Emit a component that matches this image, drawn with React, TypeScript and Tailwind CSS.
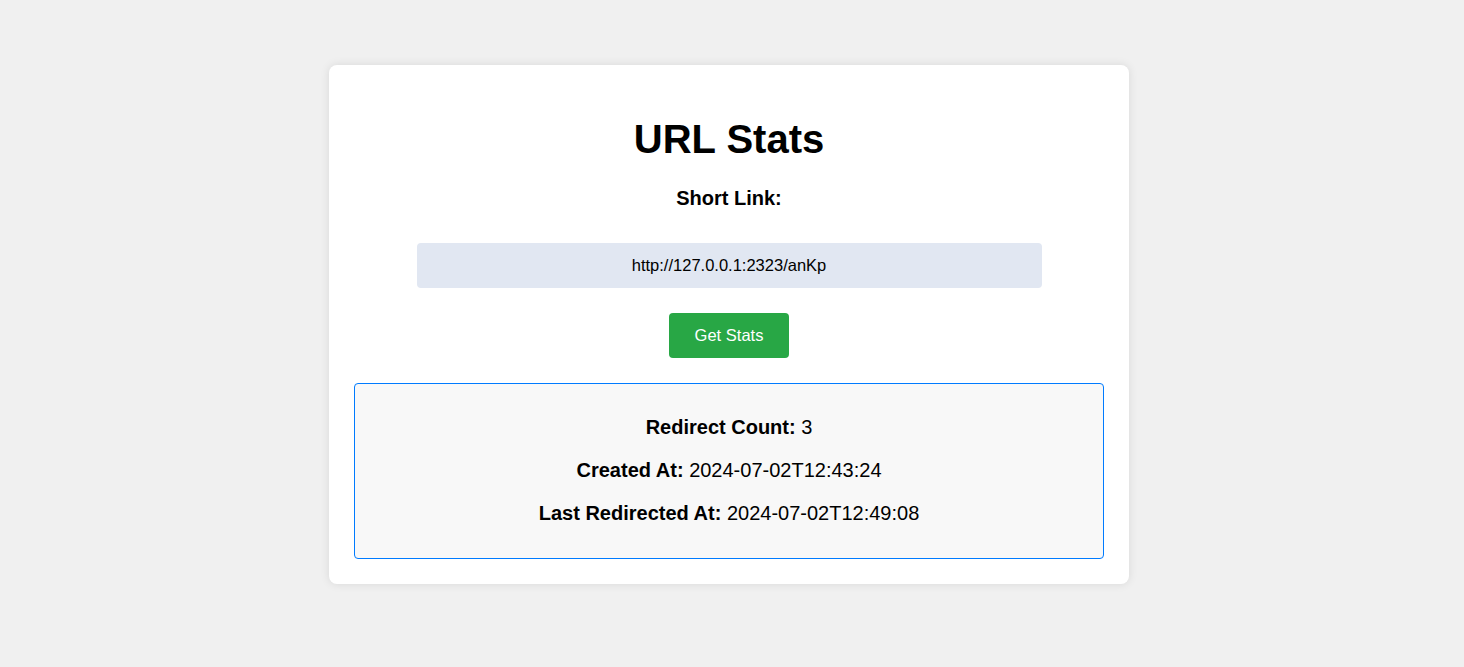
import { useState } from 'react';

export default function App() {
    const [shortLink, setShortLink] = useState('http://127.0.0.1:2323/anKp');

    const stats = {
        redirectCount: 3,
        createdAt: '2024-07-02T12:43:24',
        lastRedirectedAt: '2024-07-02T12:49:08',
    };

    return (
        <div className="min-h-screen bg-[#f0f0f0] pt-[65px] pr-[6px] flex justify-center items-start font-['Liberation_Sans',Arial,sans-serif] text-black">
            {/* Card */}
            <div className="w-[800px] bg-white rounded-lg shadow-[0_0_10px_rgba(0,0,0,0.1)] p-[25px] flex flex-col items-center">
                <h1 className="mt-[26px] text-[40px] leading-[46px] font-bold">URL Stats</h1>
                <label className="mt-[25px] text-[20px] leading-[23px] font-bold">Short Link:</label>
                <input
                    type="text"
                    value={shortLink}
                    onChange={(e) => setShortLink(e.target.value)}
                    className="mt-[33px] w-[625px] h-[45px] rounded bg-[#e1e7f2] text-center text-[16.5px] text-black outline-none"
                />
                <button className="mt-[25px] w-[120px] h-[45px] rounded bg-[#28a745] text-white text-[16.5px]">
                    Get Stats
                </button>

                {/* Results */}
                <div className="mt-[25px] w-full border border-[#007bff] rounded bg-[#f8f8f8] pt-[12px] pb-[13px] text-center text-[20px] leading-[23px]">
                    <p className="my-5"><span className="font-bold">Redirect Count:</span> {stats.redirectCount}</p>
                    <p className="my-5"><span className="font-bold">Created At:</span> {stats.createdAt}</p>
                    <p className="my-5"><span className="font-bold">Last Redirected At:</span> {stats.lastRedirectedAt}</p>
                </div>
            </div>
        </div>
    );
}
